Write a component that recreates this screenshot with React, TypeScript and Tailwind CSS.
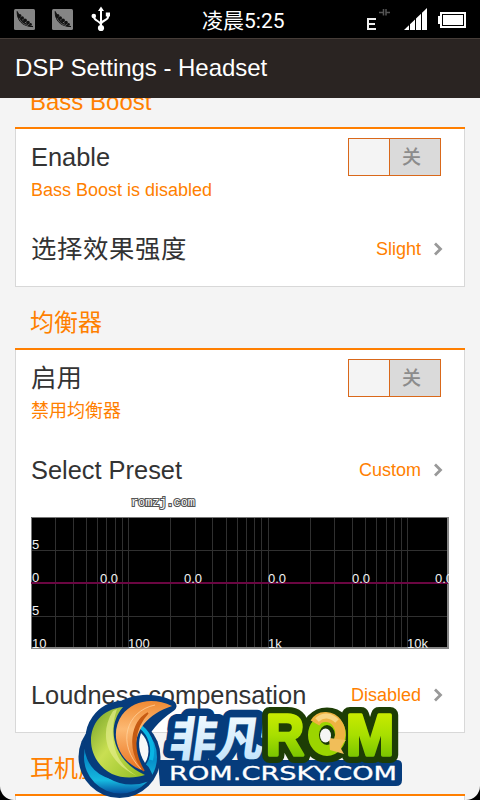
import type { ReactNode } from 'react';

const FREQS = [
  20, 30, 40, 50, 60, 70, 80, 90, 100, 200, 300, 400, 500, 600, 700, 800, 900, 1000, 2000, 3000,
  4000, 5000, 6000, 7000, 8000, 9000, 10000,
];

const BANDS = [69, 153, 237, 321, 404];

function freqX(f: number) {
  return Math.floor((Math.log10(f / 20) / 3) * 419) + 0.5;
}

function PodIcon() {
  return (
    <svg width="21" height="21" viewBox="0 0 21 21">
      <rect width="21" height="21" rx="1.5" fill="#858585" />
      <path d="M3.2 2.5C3 10 7 17.5 19 17.6C12 16 7 12 4.5 5Z" fill="#111" stroke="#111" strokeWidth="1" />
      <g fill="#111">
        <circle cx="5.8" cy="6.5" r="1.6" />
        <circle cx="8.2" cy="9" r="1.8" />
        <circle cx="11" cy="11.3" r="1.9" />
        <circle cx="14" cy="13.5" r="1.8" />
        <circle cx="16.5" cy="15.2" r="1.3" />
      </g>
      <path d="M5 9C7 13.500 10 15.500 14 16.500" fill="none" stroke="#777" strokeWidth=".7" />
    </svg>
  );
}

function UsbIcon() {
  return (
    <svg width="20" height="26" viewBox="0 0 20 26" fill="none" stroke="#fff" strokeWidth="2">
      <path d="M10 4V22M3 9V11C3 15 10 15 10 19M17 8V11C17 14.5 10 14.5 10 18" />
      <path d="M10 .5L13 5H7Z" fill="#fff" stroke="none" />
      <circle cx="2.8" cy="10" r="2.3" fill="#fff" stroke="none" />
      <path d="M14.8 6.500H19V10.500H14.800Z" fill="#fff" stroke="none" />
      <circle cx="10" cy="22" r="3.1" fill="#fff" stroke="none" />
    </svg>
  );
}

function StatusBar() {
  return (
    <div className="relative flex h-[38px] items-center bg-black text-white">
      <div className="flex w-[202px] items-center pl-[14px]">
        <PodIcon />
        <div className="w-[17px]" />
        <PodIcon />
        <div className="w-[18px]" />
        <UsbIcon />
      </div>
      <span className="mt-[3px] whitespace-nowrap font-[Roboto,'Noto_Sans_CJK_SC',sans-serif] text-[21px] leading-[24px]">
        凌晨5:25
      </span>
      <svg className="ml-auto mr-[12px] shrink-0" width="104" height="38" viewBox="364 0 104 38">
        <path d="M376 19H368V29H376M368 24H375" fill="none" stroke="#eee" strokeWidth="2" />
        <path d="M379 12.500H384M383.500 9V15.500M386 9V15.500M386 12.500H390" fill="none" stroke="#555" strokeWidth="1.500" />
        <path d="M404 30L427 8V30Z" fill="#fff" />
        <path d="M409.500 22V30M415.500 16V30M421.500 10V30" stroke="#000" strokeWidth="1" />
        <path d="M438 16H440V12H466V28H440V24H438Z" fill="#fff" />
        <rect x="442.500" y="14.500" width="21" height="11" fill="#fff" stroke="#000" strokeWidth="1" />
      </svg>
    </div>
  );
}

function Toggle() {
  return (
    <div className="flex h-[38px] w-[93px] border border-[#d9681a] bg-[#dadada]">
      <div className="w-[41px] border-r border-[#d9681a] bg-[#f4f4f4]" />
      <span className="pl-[12px] text-[19px] font-medium leading-[37px] text-[#8c8c8c]">关</span>
    </div>
  );
}

function Chevron() {
  return (
    <svg className="ml-[12px]" width="10" height="14" viewBox="0 0 10 14">
      <path d="M2 1.5L7.5 7L2 12.5" fill="none" stroke="#999" strokeWidth="2.8" />
    </svg>
  );
}

function SectionTitle({ children }: { children: ReactNode }) {
  return (
    <h2 className="h-[61px] pl-[15px] pt-[18px] text-[24px] leading-[36px] text-[#ff8000]">{children}</h2>
  );
}

function Card({ children }: { children: ReactNode }) {
  return (
    <section className="border-t-2 border-[#ff7f00]">
      <div className="border border-t-0 border-[#d8d8d8] bg-white pl-[15px]">{children}</div>
    </section>
  );
}

function SwitchRow({ title, summary }: { title: string; summary: string }) {
  return (
    <div className="flex h-[83px] justify-between pr-[23px] pt-[9px]">
      <div>
        <div className="h-[38px] text-[25.4px] leading-[38px] text-[#333]">{title}</div>
        <div className="mt-[2px] text-[18px] leading-[25px] text-[#ff8000]">{summary}</div>
      </div>
      <Toggle />
    </div>
  );
}

function ListRow({ title, value }: { title: ReactNode; value: string }) {
  return (
    <div className="flex h-[74px] items-center pr-[21px]">
      <span className="whitespace-nowrap text-[25.4px] leading-[38px] text-[#333]">{title}</span>
      <span className="ml-auto text-[18px] text-[#ff8000]">{value}</span>
      <Chevron />
    </div>
  );
}

function Equalizer() {
  return (
    <svg className="block" width="418" height="132" viewBox="0 0 418 132">
      <rect width="418" height="132" fill="#000" />
      <g stroke="#303030">
        {FREQS.map((f) => (
          <line key={f} x1={freqX(f)} x2={freqX(f)} y1="0" y2="132" />
        ))}
        <path d="M0 33.5H418M0 99.5H418" />
      </g>
      <path d="M.5 132V.5H417" fill="none" stroke="#777" />
      <path d="M0 131H417V0" fill="none" stroke="#858585" strokeWidth="2" />
      <rect y="65" width="417" height="2" fill="#6b0642" />
      <g fill="#f2f2f2" fontSize="13" fontFamily="Liberation Sans, sans-serif">
        <text x="1" y="32">5</text>
        <text x="1" y="65">0</text>
        <text x="1" y="98">5</text>
        <text x="1" y="131">10</text>
        <text x="97" y="131">100</text>
        <text x="237" y="131">1k</text>
        <text x="376" y="131">10k</text>
        {BANDS.map((x) => (
          <text key={x} x={x} y="66">0.0</text>
        ))}
      </g>
    </svg>
  );
}

function RomLogo() {
  return (
    <svg className="absolute left-[75px] top-[690px]" width="330" height="110" viewBox="75 690 330 110">
      <defs>
        <linearGradient id="green" x1="0" y1="0" x2="1" y2="1">
          <stop offset="0" stopColor="#6f9f24" />
          <stop offset=".45" stopColor="#c9df52" />
          <stop offset="1" stopColor="#8fbd22" />
        </linearGradient>
        <linearGradient id="orange" x1="0" y1="0" x2="0" y2="1">
          <stop offset="0" stopColor="#f08a33" />
          <stop offset=".4" stopColor="#fcb973" />
          <stop offset="1" stopColor="#e9711d" />
        </linearGradient>
        <linearGradient id="cyan" x1="0" y1="0" x2="0" y2="1">
          <stop offset="0" stopColor="#09b5e4" />
          <stop offset=".55" stopColor="#078fca" />
          <stop offset=".82" stopColor="#16b9df" />
          <stop offset="1" stopColor="#0650a0" />
        </linearGradient>
        <linearGradient id="lime" x1="0" y1="0" x2="0" y2="1">
          <stop offset="0" stopColor="#d8f000" />
          <stop offset=".5" stopColor="#a8df00" />
          <stop offset="1" stopColor="#65b800" />
        </linearGradient>
        <linearGradient id="ice" x1="0" y1="0" x2="0" y2="1">
          <stop offset="0" stopColor="#fff" />
          <stop offset="1" stopColor="#b9e0fb" />
        </linearGradient>
      </defs>

      {/* site address plate */}
      <path
        d="M158 760H397Q402 760 402 765V780Q402 786 396 786H160Z"
        fill="#063c7c"
      />

      {/* Chinese name */}
      <g
        transform="translate(168 756) skewX(-8)"
        fontFamily="Noto Sans CJK SC, sans-serif"
        fontWeight="900"
        fontSize="47"
        strokeLinejoin="round"
      >
        <text textLength="94" stroke="#063c7c" strokeWidth="15" fill="#063c7c">非凡</text>
        <text textLength="94" fill="url(#ice)">非凡</text>
      </g>

      {/* ROM with the arrow ring in the middle */}
      <g fontFamily="Liberation Sans, sans-serif" fontWeight="bold" fontSize="57" strokeLinejoin="round">
        <g fill="#1d3d05" stroke="#1d3d05" strokeWidth="16">
          <text x="266" y="755" textLength="38" lengthAdjust="spacingAndGlyphs">R</text>
          <text x="346" y="755" textLength="48" lengthAdjust="spacingAndGlyphs">M</text>
          <ellipse cx="327" cy="735" rx="14" ry="15" fill="none" strokeWidth="25" />
        </g>
        <g fill="url(#lime)" stroke="url(#lime)" strokeWidth="3.5">
          <text x="266" y="755" textLength="38" lengthAdjust="spacingAndGlyphs">R</text>
          <text x="346" y="755" textLength="48" lengthAdjust="spacingAndGlyphs">M</text>
        </g>
      </g>
      <ellipse cx="327" cy="735" rx="13.5" ry="15.5" fill="none" stroke="#9bd500" strokeWidth="11" />
      <path d="M315 723C320 714 332 716 337 723C343 731 340 740 336 747" fill="none" stroke="#efb341" strokeWidth="10" />
      <path d="M317 720C323 714 331 715 337 721" fill="none" stroke="#f8d582" strokeWidth="5" />
      <path d="M329 738L330 750L344 754L340 747L346 740Z" fill="#f1be59" />
      <ellipse cx="325.500" cy="735.500" rx="5.500" ry="7" fill="#f5f5f5" />

      {/* site address */}
      <text
        x="169"
        y="780"
        fill="#fff"
        stroke="#fff"
        strokeWidth=".3"
        fontFamily="DejaVu Sans, sans-serif"
        fontSize="19"
        textLength="228"
        lengthAdjust="spacingAndGlyphs"
      >
        ROM.CRSKY.COM
      </text>

      {/* swirl */}
      <circle cx="119.5" cy="757" r="41" fill="#063c7c" />
      <circle cx="120.500" cy="757" r="36.5" fill="url(#cyan)" />
      <circle cx="118" cy="746" r="33.5" fill="#063c7c" />
      <path
        d="M123 706C99 708 88 728 92 745C95 769 121 786 147 776L144 770C132 762 134 731 171 706C151 696 133 701 123 706Z"
        fill="#063c7c"
        stroke="#063c7c"
        strokeWidth="11"
        strokeLinejoin="round"
      />
      <path d="M141 727C151 735 154 748 151 760" fill="none" stroke="#09b5e4" strokeWidth="4" />
      <path d="M123 707C84 711 81 758 112 774C123 779 136 778 145 775C115 762 104 729 123 707Z" fill="url(#green)" />
      <path d="M113 711C99 733 105 761 137 776C115 764 107 738 117 709Z" fill="#e2ec89" opacity=".7" />
      <path d="M172 706C154 697 133 700 122 715C108 735 119 763 144 771C129 750 133 719 172 706Z" fill="url(#orange)" />
      <path d="M148 713C132 722 126 749 144 771C131 750 134 728 148 713Z" fill="#c65b13" stroke="#c65b13" strokeWidth="1.500" />
      <path d="M155 705C126 711 116 744 141 769" fill="none" stroke="#ffd09a" strokeWidth=".8" />
      <path d="M141 733C149 740 151 754 145 763C138 752 138 742 141 733Z" fill="#f8f8f8" />
    </svg>
  );
}

export default function App() {
  return (
    <div className="relative h-[800px] w-[480px] overflow-hidden bg-black font-['Liberation_Sans','Noto_Sans_CJK_SC',sans-serif]">
      <StatusBar />
      <header className="h-[60px] border-t border-[#463d38] bg-[#2a2422] pl-[15px] text-[24px] leading-[58px] tracking-[-0.04px] text-white">
        DSP Settings - Headset
      </header>
      <main className="h-[702px] overflow-hidden rounded-b-[14px] bg-[#f4f4f4] px-[15px]">
        <div className="-mt-[32px]">
          <SectionTitle>Bass Boost</SectionTitle>
        </div>
        <Card>
          <SwitchRow title="Enable" summary="Bass Boost is disabled" />
          <ListRow title={<span className="tracking-[0.6px]">选择效果强度</span>} value="Slight" />
        </Card>
        <SectionTitle>均衡器</SectionTitle>
        <Card>
          <SwitchRow title="启用" summary="禁用均衡器" />
          <ListRow title="Select Preset" value="Custom" />
          <div className="pt-[10px]">
            <Equalizer />
          </div>
          <div className="pt-[9px]">
            <ListRow title="Loudness compensation" value="Disabled" />
          </div>
        </Card>
        <SectionTitle>耳机虚拟化</SectionTitle>
        <Card>
          <div className="h-[80px]" />
        </Card>
      </main>
      <svg className="absolute left-[128px] top-[492px]" width="72" height="18">
        <text
          x="3"
          y="14"
          fontFamily="Liberation Mono, monospace"
          fontSize="12"
          textLength="64"
          fill="#fff"
          stroke="#555"
          strokeWidth="2.2"
          paintOrder="stroke"
        >
          romzj.com
        </text>
      </svg>
      <RomLogo />
    </div>
  );
}
